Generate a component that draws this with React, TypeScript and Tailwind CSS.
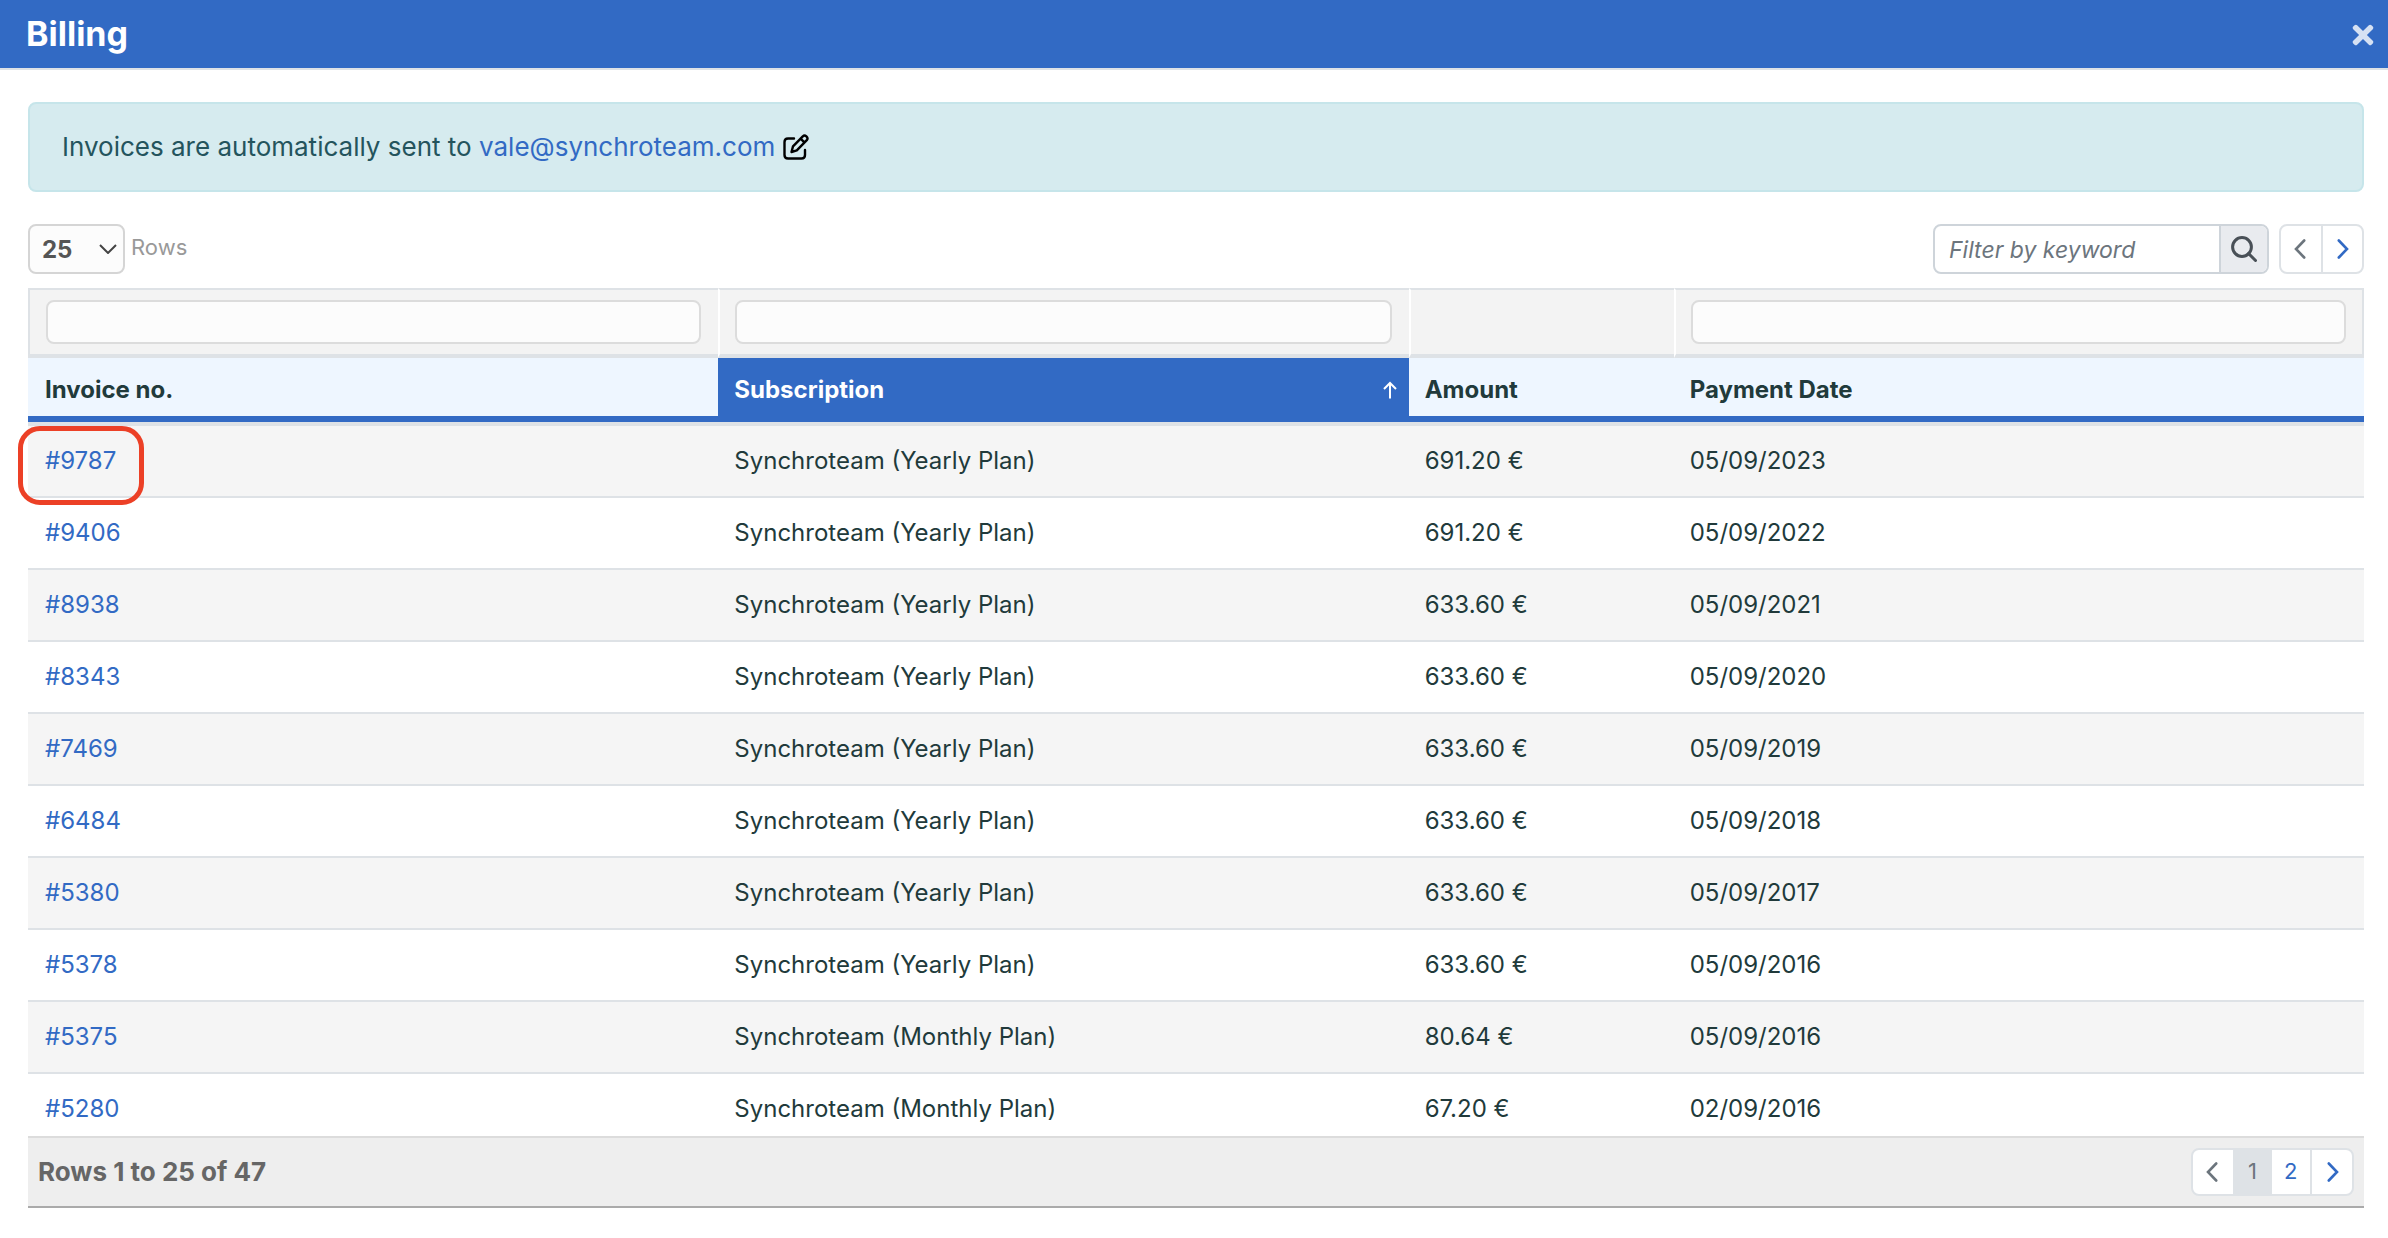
import { useState } from "react";
import { FaTimes } from "react-icons/fa";

type Invoice = {
    no: number;
    plan: string;
    amount: string;
    date: string;
};

const invoices: Invoice[] = [
    { no: 9787, plan: "Yearly", amount: "691.20 €", date: "05/09/2023" },
    { no: 9406, plan: "Yearly", amount: "691.20 €", date: "05/09/2022" },
    { no: 8938, plan: "Yearly", amount: "633.60 €", date: "05/09/2021" },
    { no: 8343, plan: "Yearly", amount: "633.60 €", date: "05/09/2020" },
    { no: 7469, plan: "Yearly", amount: "633.60 €", date: "05/09/2019" },
    { no: 6484, plan: "Yearly", amount: "633.60 €", date: "05/09/2018" },
    { no: 5380, plan: "Yearly", amount: "633.60 €", date: "05/09/2017" },
    { no: 5378, plan: "Yearly", amount: "633.60 €", date: "05/09/2016" },
    { no: 5375, plan: "Monthly", amount: "80.64 €", date: "05/09/2016" },
    { no: 5280, plan: "Monthly", amount: "67.20 €", date: "02/09/2016" },
];

function Chevron({ d, className }: { d: string; className: string }) {
    return (
        <svg viewBox="0 0 12 20" fill="none" stroke="currentColor" strokeWidth="2.6" strokeLinecap="round" className={className}>
            <path d={d} />
        </svg>
    );
}

const LEFT = "M10.2 1.5 L2 10 L10.2 18.5";
const RIGHT = "M1.8 1.5 L10 10 L1.8 18.5";

function App() {
    const [rows, setRows] = useState("25");
    const [keyword, setKeyword] = useState("");

    const filterInput = (label: string) => (
        <input
            type="text"
            aria-label={label}
            className="block h-11 w-full rounded-lg border-2 border-[#dcdcdc] bg-[#fcfcfc] px-3 outline-none"
        />
    );

    return (
        <main className="flex h-screen flex-col bg-white pb-[30px] font-['Inter',sans-serif] text-2xl text-[#213a3b]">
            <header className="flex h-[70px] shrink-0 items-center justify-between border-b-2 border-[#dee2e6] bg-[#326ac4] pr-[10px] pl-[26px]">
                <h1 className="text-[34px] leading-10 font-bold text-white">Billing</h1>
                <button type="button" aria-label="Close" className="pt-[2px] text-[#d6e1f3]">
                    <FaTimes className="size-[30px]" />
                </button>
            </header>

            <div className="mt-8 mr-6 ml-7 flex h-[90px] shrink-0 items-center gap-2 rounded-lg border-2 border-[#c6e5ea] bg-[#d6ebef] px-8 text-[26px] text-[#24545d]">
                <p>
                    Invoices are automatically sent to{" "}
                    <a href="mailto:vale@synchroteam.com" className="text-[#326ac4]">vale@synchroteam.com</a>
                </p>
                <button type="button" aria-label="Edit email" className="text-black">
                    <svg viewBox="0 0 26 26" fill="none" stroke="currentColor" strokeWidth="2.4" strokeLinecap="round" strokeLinejoin="round" className="size-[26px]">
                        <path d="M11 4.5 H5 Q1.5 4.5 1.5 8 V21 Q1.5 24.5 5 24.5 H18.5 Q22 24.5 22 21 V16" />
                        <path d="M8.5 18 L10 12.4 L19.8 2.3 Q21.5 0.8 23.4 2.4 Q25.4 4.4 23.8 6.2 L13.8 16.4 Z M17.6 4.6 L21.4 8.4" />
                    </svg>
                </button>
            </div>

            <div className="mt-8 mr-6 ml-7 flex h-[50px] shrink-0 items-center justify-between">
                <div className="flex items-center gap-[6px]">
                    <div className="relative">
                        <select
                            id="rows"
                            value={rows}
                            onChange={(e) => setRows(e.target.value)}
                            className="block h-[50px] w-[97px] appearance-none rounded-lg border-2 border-[#d5d5d5] bg-[#fcfcfc] pt-[2px] pl-3 text-2xl font-bold text-[#555555] outline-none"
                        >
                            <option>25</option>
                            <option>50</option>
                            <option>100</option>
                        </select>
                        <svg viewBox="0 0 18 10" fill="none" stroke="#444444" strokeWidth="2" className="pointer-events-none absolute top-5 right-2 h-[10px] w-[18px]">
                            <path d="M1 1 L9 9 L17 1" />
                        </svg>
                    </div>
                    <label htmlFor="rows" className="pb-[2px] text-[22px] text-[#999999]">Rows</label>
                </div>
                <div className="flex items-center gap-[10px]">
                    <div className="flex h-[50px] w-[336px] overflow-hidden rounded-lg border-2 border-[#ced4da]">
                        <input
                            type="text"
                            aria-label="Filter by keyword"
                            placeholder="Filter by keyword"
                            value={keyword}
                            onChange={(e) => setKeyword(e.target.value)}
                            className="min-w-0 flex-1 px-[14px] pt-[2px] text-[23px] italic outline-none placeholder:text-[#6c757d]"
                        />
                        <button type="button" aria-label="Search" className="flex w-12 items-center justify-center border-l-2 border-[#ced4da] bg-[#e9ebef] text-[#495057]">
                            <svg viewBox="0 0 26 26" fill="none" stroke="currentColor" strokeWidth="3" strokeLinecap="round" className="size-[26px]">
                                <circle cx="11" cy="11" r="9.4" />
                                <path d="M17.5 17.5 L24.5 24.5" />
                            </svg>
                        </button>
                    </div>
                    <div className="flex h-[50px] w-[85px] divide-x-2 divide-[#dee2e6] rounded-lg border-2 border-[#dee2e6]">
                        <button type="button" aria-label="Previous" className="flex flex-1 items-center justify-center pr-[2px] text-[#6c757d]">
                            <Chevron d={LEFT} className="h-5 w-3" />
                        </button>
                        <button type="button" aria-label="Next" className="flex flex-1 items-center justify-center pl-[2px] text-[#326ac4]">
                            <Chevron d={RIGHT} className="h-5 w-3" />
                        </button>
                    </div>
                </div>
            </div>

            {/* scrolling list */}
            <div className="mt-[14px] min-h-0 flex-1 overflow-y-auto pr-6 pl-7 [scrollbar-width:none]">
                <table className="w-full table-fixed border-separate border-spacing-0 text-left">
                    <colgroup>
                        <col />
                        <col />
                        <col className="w-[265px]" />
                        <col />
                    </colgroup>
                    <thead>
                        <tr className="h-[70px] bg-[#f3f3f3]">
                            <td className="border-t-2 border-b-4 border-l-2 border-[#dee2e6] pr-[17px] pl-4">{filterInput("Filter invoice no.")}</td>
                            <td className="border-t-2 border-b-4 border-l-2 border-[#dee2e6] border-l-white pr-[17px] pl-[15px]">{filterInput("Filter subscription")}</td>
                            <td className="border-t-2 border-b-4 border-l-2 border-[#dee2e6] border-l-white"></td>
                            <td className="border-t-2 border-r-2 border-b-4 border-l-2 border-[#dee2e6] border-l-white pr-4 pl-[15px]">{filterInput("Filter payment date")}</td>
                        </tr>
                        <tr className="h-16 bg-[#eef6ff]">
                            <th className="border-b-6 border-[#326ac4] pt-[6px] pl-[17px] font-bold">Invoice no.</th>
                            <th className="border-b-6 border-[#326ac4] bg-[#326ac4] px-4 pt-[6px] font-bold text-white" aria-sort="ascending">
                                <div className="flex items-center justify-between">
                                    Subscription
                                    <svg viewBox="0 0 14 18" fill="none" stroke="currentColor" strokeWidth="2" className="mr-[-4px] h-[18px] w-[14px]">
                                        <path d="M7 17.5 V2 M1 8 L7 2 L13 8" />
                                    </svg>
                                </div>
                            </th>
                            <th className="border-b-6 border-[#326ac4] px-4 pt-[6px] font-bold">Amount</th>
                            <th className="border-b-6 border-[#326ac4] px-4 pt-[6px] font-bold">Payment Date</th>
                        </tr>
                    </thead>
                    <tbody>
                        <tr className="h-1 bg-[#dee2e6]" aria-hidden="true">
                            <td colSpan={4}></td>
                        </tr>
                        {invoices.map((item, index) => {
                            return (
                                <tr key={item.no} className="h-[72px] even:bg-[#f5f5f5]">
                                    <td className="relative border-b-2 border-[#dee2e6] pl-[17px]">
                                        <a href={"#" + item.no} className="text-[#326ac4]">#{item.no}</a>
                                        {index === 0 &&
                                            <span className="pointer-events-none absolute top-0 left-[-10px] h-[79px] w-[126px] rounded-[22px] border-5 border-[#ec4026]"></span>
                                        }
                                    </td>
                                    <td className="border-b-2 border-[#dee2e6] px-4">Synchroteam ({item.plan} Plan)</td>
                                    <td className="border-b-2 border-[#dee2e6] px-4">{item.amount}</td>
                                    <td className="border-b-2 border-[#dee2e6] px-4">{item.date}</td>
                                </tr>
                            );
                        })}
                    </tbody>
                </table>
            </div>

            <footer className="mr-6 ml-7 flex h-[72px] shrink-0 items-center justify-between border-t-2 border-b-2 border-t-[#dcdcdc] border-b-[#aaaaaa] bg-[#eeeeee] px-[10px]">
                <p className="text-[26px] font-bold text-[#666666]">Rows 1 to 25 of 47</p>
                <nav aria-label="Pages" className="flex h-12 w-[163px] overflow-hidden rounded-lg border-2 border-[#dee2e6] bg-white text-[22px] text-[#326ac4]">
                    <button type="button" aria-label="Previous page" className="flex flex-1 items-center justify-center pr-[2px] text-[#6c757d]">
                        <Chevron d={LEFT} className="h-5 w-3" />
                    </button>
                    <button type="button" className="flex-1 bg-[#dee2e6] text-[#6c757d]">1</button>
                    <button type="button" className="flex-1">2</button>
                    <button type="button" aria-label="Next page" className="flex flex-1 items-center justify-center border-l-2 border-[#dee2e6] pl-[2px]">
                        <Chevron d={RIGHT} className="h-5 w-3" />
                    </button>
                </nav>
            </footer>
        </main>
    );
}

export default App;
